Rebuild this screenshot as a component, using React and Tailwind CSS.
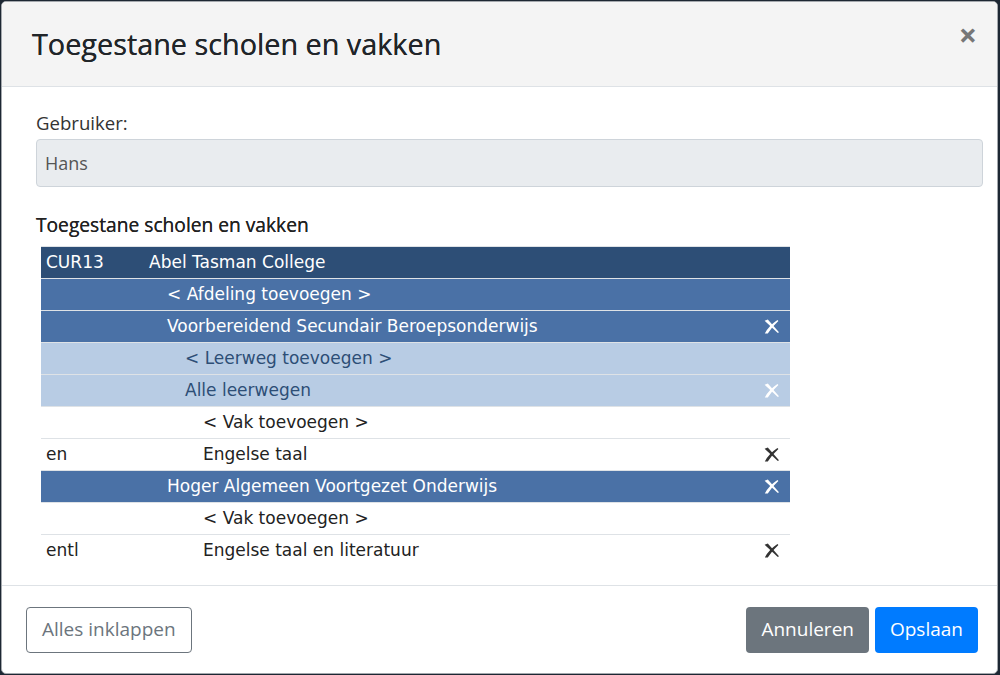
import React from "react";

const rows = [
  { code: "CUR13", name: "Abel Tasman College", level: 0, kind: "school" },
  { code: "", name: "< Afdeling toevoegen >", level: 1, kind: "afd" },
  { code: "", name: "Voorbereidend Secundair Beroepsonderwijs", level: 1, kind: "afd", del: true },
  { code: "", name: "< Leerweg toevoegen >", level: 2, kind: "lw" },
  { code: "", name: "Alle leerwegen", level: 2, kind: "lw", del: true },
  { code: "", name: "< Vak toevoegen >", level: 3, kind: "vak" },
  { code: "en", name: "Engelse taal", level: 3, kind: "vak", del: true },
  { code: "", name: "Hoger Algemeen Voortgezet Onderwijs", level: 1, kind: "afd", del: true },
  { code: "", name: "< Vak toevoegen >", level: 3, kind: "vak" },
  { code: "entl", name: "Engelse taal en literatuur", level: 3, kind: "vak", del: true },
];

const rowStyle = {
  school: "bg-[#2d4e76] text-white",
  afd: "bg-[#4a71a6] text-white",
  lw: "bg-[#b8cce4] text-[#2d4e76]",
  vak: "bg-white text-[#222]",
};

const indent = ["pl-[5px]", "pl-[23px]", "pl-[41px]", "pl-[59px]"];

// hand-drawn looking delete cross
const DelIcon = ({ light }) => (
  <svg width="16" height="15" viewBox="0 0 16 15" className={light ? "text-white" : "text-[#333]"}>
    <path d="M0.6 1.8 L3.8 0.6 L15 13.2 L13.8 14 Z" fill="currentColor" />
    <path d="M0.8 14.4 Q4.6 7 13.4 1 L14.4 2 Q8 7.8 3.8 14.4 Z" fill="currentColor" />
  </svg>
);

const App = () => {
  return (
    <div className="h-[675px] w-[1000px] bg-[#1d2733] pt-px pb-px pl-px pr-[2px] [font-family:'Open_Sans',sans-serif]">
      <div className="flex h-full flex-col overflow-hidden rounded-[5px] border border-[#a4a8ad] bg-white">
        {/* header */}
        <div className="flex h-[85px] shrink-0 items-center justify-between border-b border-[#dee2e6] bg-[#f4f4f4] pl-[30px] pr-[20px]">
          <h3 className="text-[28.8px] leading-none text-[#212529] [text-shadow:0_0_0.4px_#212529]">
            Toegestane scholen en vakken
          </h3>
          <button className="-mt-[18px] text-[32px] font-bold leading-none text-[#777]">×</button>
        </div>

        {/* body */}
        <div className="flex-1 pl-[34px] pr-[14px] pt-[24px]">
          <label className="block text-[18.6px] leading-[24px] text-[#333]">Gebruiker:</label>
          <div className="mt-[4px] flex h-[48px] items-center rounded-[4px] border border-[#ced4da] bg-[#e9ecef] px-[8px] text-[18px] text-[#555]">
            Hans
          </div>

          <div className="mt-[26px] text-[19.2px] leading-[24px] text-[#222] [text-shadow:0_0_0.4px_#222]">
            Toegestane scholen en vakken
          </div>

          <div className="ml-[5px] mt-[9px] w-[749px] text-[17px] [font-family:'DejaVu_Sans',sans-serif]">
            {rows.map((r, i) => (
              <div
                key={i}
                className={`flex h-[32px] items-center border-t border-[#dee2e6] ${rowStyle[r.kind]}`}
              >
                <div className="w-[103px] shrink-0 pl-[5px]">{r.code}</div>
                <div className={`flex-1 ${indent[r.level]}`}>{r.name}</div>
                <div className="flex w-[26px] shrink-0 justify-start">
                  {r.del && <DelIcon light={r.kind !== "vak"} />}
                </div>
              </div>
            ))}
          </div>
        </div>

        {/* footer */}
        <div className="flex h-[88px] shrink-0 items-center justify-between border-t border-[#dee2e6] pl-[24px] pr-[19px]">
          <button className="h-[46px] rounded-[4px] border border-[#6c757d] px-[15px] text-[19px] text-[#6c757d]">
            Alles inklappen
          </button>
          <div className="flex gap-[6px]">
            <button className="h-[46px] rounded-[4px] bg-[#6c757d] px-[15px] text-[19px] text-white">
              Annuleren
            </button>
            <button className="h-[46px] rounded-[4px] bg-[#007bff] px-[15px] text-[19px] text-white">
              Opslaan
            </button>
          </div>
        </div>
      </div>
    </div>
  );
};

export default App;
